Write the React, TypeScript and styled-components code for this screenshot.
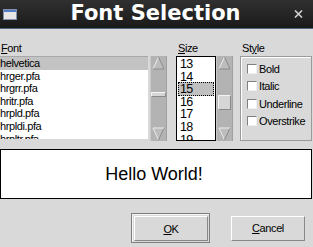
import React from "react"
import styled, { createGlobalStyle } from "styled-components"

const GlobalStyle = createGlobalStyle`
  html, body {
    margin: 0;
    padding: 0;
    background: #d9d9d9;
    overflow: hidden;
  }
`

const fonts = ["helvetica", "hrger.pfa", "hrgrr.pfa", "hritr.pfa", "hrpld.pfa", "hrpldi.pfa", "hrpltr.pfa"]
const sizes = ["13", "14", "15", "16", "17", "18", "19"]
const styles = ["Bold", "Italic", "Underline", "Overstrike"]

const Window = styled.div`
  width: 313px;
  height: 247px;
  display: flex;
  flex-direction: column;
  background: #d9d9d9;
  font-family: "Liberation Sans", Arial, sans-serif;
  font-size: 11px;
  letter-spacing: -0.4px;
  color: #000;
`

const TitleBar = styled.div`
  height: 28px;
  display: flex;
  align-items: center;
  padding: 0 10px 0 3px;
  background: linear-gradient(#303030, #1a1a1a);
  border-bottom: 1px solid #4f6383;
`

const Title = styled.div`
  flex: 1;
  text-align: center;
  color: #fff;
  font-family: "DejaVu Sans", sans-serif;
  font-weight: bold;
  font-size: 21px;
  letter-spacing: 0;
  padding-bottom: 3px;
`

const Body = styled.div`
  display: flex;
  flex-direction: column;
`

const TopRow = styled.div`
  display: flex;
  margin-top: 13px;
`

const Column = styled.div<{ $width: number; $gap?: number }>`
  width: ${(p) => p.$width}px;
  margin-left: ${(p) => p.$gap || 0}px;
  display: flex;
  flex-direction: column;
`

const Label = styled.div<{ $indent?: number }>`
  height: 14px;
  line-height: 13px;
  padding-left: ${(p) => p.$indent || 0}px;
`

const ListRow = styled.div`
  display: flex;
  height: 85px;
`

const FontList = styled.div`
  width: 150px;
  margin-right: 2px;
  background: #fff;
  border-top: 1px solid #a8a8a8;
  border-bottom: 2px solid #d9d9d9;
  overflow: hidden;
`

const FontItem = styled.div<{ $selected?: boolean }>`
  height: 12.6px;
  line-height: 12.6px;
  white-space: nowrap;
  background: ${(p) => (p.$selected ? "#c3c3c3" : "transparent")};
`

const SizeList = styled.div`
  width: 39px;
  border: 1px solid #000;
  background: #fff;
  overflow: hidden;
`

const SizeItem = styled.div<{ $selected?: boolean }>`
  height: 12.6px;
  line-height: 12.6px;
  font-size: 12.5px;
  letter-spacing: -0.6px;
  padding-left: 1px;
  box-sizing: border-box;
  margin: 0 1px;
  background: ${(p) => (p.$selected ? "#c0c0c0" : "transparent")};
  border: 1px dotted ${(p) => (p.$selected ? "#000" : "transparent")};
  margin-top: -1px;
  height: 13.6px;
  &:first-child {
    margin-top: 0;
  }
`

const Scrollbar = styled.div`
  width: 15px;
  display: flex;
  flex-direction: column;
  background: #b3b3b3;
  border-left: 1px solid #c8c8c8;
  border-right: 1px solid #a0a0a0;
`

const Track = styled.div<{ $offset: number }>`
  flex: 1;
  padding-top: ${(p) => p.$offset}px;
`

const Thumb = styled.div<{ $height: number }>`
  height: ${(p) => p.$height}px;
  box-sizing: border-box;
  margin: 0 ${(p) => (p.$height > 8 ? 1 : 0)}px;
  background: #d6d6d6;
  border-top: 1px solid #f4f4f4;
  border-left: 1px solid #f4f4f4;
  border-bottom: 1px solid #8a8a8a;
  border-right: 1px solid #8a8a8a;
`

const StyleFrame = styled.div`
  height: 85px;
  box-sizing: border-box;
  border: 1px solid #9a9a9a;
  box-shadow: inset 1px 1px 0 #fff;
  padding: 3px 0 0 6px;
  display: flex;
  flex-direction: column;
`

const CheckRow = styled.div`
  height: 17.5px;
  display: flex;
  align-items: center;
  gap: 2px;
`

const CheckBox = styled.span`
  width: 10px;
  height: 10px;
  box-sizing: border-box;
  background: #fff;
  border-top: 1px solid #808080;
  border-left: 1px solid #808080;
  border-bottom: 1px solid #f0f0f0;
  border-right: 1px solid #f0f0f0;
`

const Preview = styled.div`
  margin-top: 8px;
  width: 312px;
  height: 50px;
  box-sizing: border-box;
  border: 1px solid #000;
  background: #fff;
  display: flex;
  align-items: center;
  justify-content: center;
  font-size: 18px;
  letter-spacing: 0;
  padding-right: 4px;
`

const ButtonRow = styled.div`
  display: flex;
  justify-content: flex-end;
  align-items: center;
  gap: 21px;
  padding-right: 8px;
  margin-top: 14px;
`

const DefaultFrame = styled.div`
  border: 1px solid #7f7f7f;
  box-shadow: inset 1px 1px 0 #f4f4f4;
  padding: 2px 1px 1px 2px;
  display: flex;
`

const Button = styled.div`
  width: 74px;
  height: 25px;
  box-sizing: border-box;
  display: flex;
  align-items: center;
  justify-content: center;
  border-top: 1px solid #fff;
  border-left: 1px solid #fff;
  border-bottom: 1px solid #888;
  border-right: 1px solid #888;
  background: #d9d9d9;
`

const Arrow: React.FC<{ down?: boolean }> = ({ down }) => (
  <svg width="15" height="14" viewBox="0 0 15 14" style={{ display: "block" }}>
    {down ? (
      <>
        <polygon points="2,1 13,1 7.5,13" fill="#bdbdbd" />
        <line x1="2" y1="1" x2="7.5" y2="13" stroke="#ececec" />
        <line x1="7.5" y1="13" x2="13" y2="1" stroke="#8c8c8c" />
        <line x1="2" y1="1" x2="13" y2="1" stroke="#ececec" />
      </>
    ) : (
      <>
        <polygon points="7.5,1 13,13 2,13" fill="#bdbdbd" />
        <line x1="7.5" y1="1" x2="2" y2="13" stroke="#ececec" />
        <line x1="7.5" y1="1" x2="13" y2="13" stroke="#8c8c8c" />
        <line x1="2" y1="13" x2="13" y2="13" stroke="#8c8c8c" />
      </>
    )}
  </svg>
)

const ScrollBar: React.FC<{ offset: number; thumb: number }> = ({ offset, thumb }) => (
  <Scrollbar>
    <Arrow />
    <Track $offset={offset}>
      <Thumb $height={thumb} />
    </Track>
    <Arrow down />
  </Scrollbar>
)

const WindowIcon = () => (
  <svg width="14" height="11" viewBox="0 0 14 11" style={{ display: "block" }}>
    <rect x="0.5" y="0.5" width="13" height="10" fill="#e6e6e6" stroke="#8090b0" />
    <rect x="1" y="1" width="12" height="2" fill="#4f7cc4" />
  </svg>
)

const CloseIcon = () => (
  <svg width="9" height="8" viewBox="0 0 9 8" style={{ display: "block" }}>
    <path d="M1 0.5 L8 7.5 M8 0.5 L1 7.5" stroke="#cfcfcf" strokeWidth="1.6" />
  </svg>
)

const App: React.FC = () => {
  return (
    <Window>
      <GlobalStyle />
      <TitleBar>
        <WindowIcon />
        <Title>Font Selection</Title>
        <CloseIcon />
      </TitleBar>
      <Body>
        <TopRow>
          <Column $width={167}>
            <Label $indent={1}>
              <u>F</u>ont
            </Label>
            <ListRow>
              <FontList>
                {fonts.map((f, i) => (
                  <FontItem key={f} $selected={i === 0}>
                    {f}
                  </FontItem>
                ))}
              </FontList>
              <ScrollBar offset={22} thumb={5} />
            </ListRow>
          </Column>
          <Column $width={57} $gap={9}>
            <Label $indent={2}>
              <u>S</u>ize
            </Label>
            <ListRow>
              <SizeList>
                {sizes.map((s, i) => (
                  <SizeItem key={s} $selected={i === 2}>
                    {s}
                  </SizeItem>
                ))}
              </SizeList>
              <ScrollBar offset={25} thumb={15} />
            </ListRow>
          </Column>
          <Column $width={72} $gap={7}>
            <Label $indent={2}>
              St<u>y</u>le
            </Label>
            <StyleFrame>
              {styles.map((s) => (
                <CheckRow key={s}>
                  <CheckBox />
                  {s}
                </CheckRow>
              ))}
            </StyleFrame>
          </Column>
        </TopRow>
        <Preview>Hello World!</Preview>
        <ButtonRow>
          <DefaultFrame>
            <Button>
              <span>
                <u>O</u>K
              </span>
            </Button>
          </DefaultFrame>
          <Button>
            <span>
              <u>C</u>ancel
            </span>
          </Button>
        </ButtonRow>
      </Body>
    </Window>
  )
}

export default App
